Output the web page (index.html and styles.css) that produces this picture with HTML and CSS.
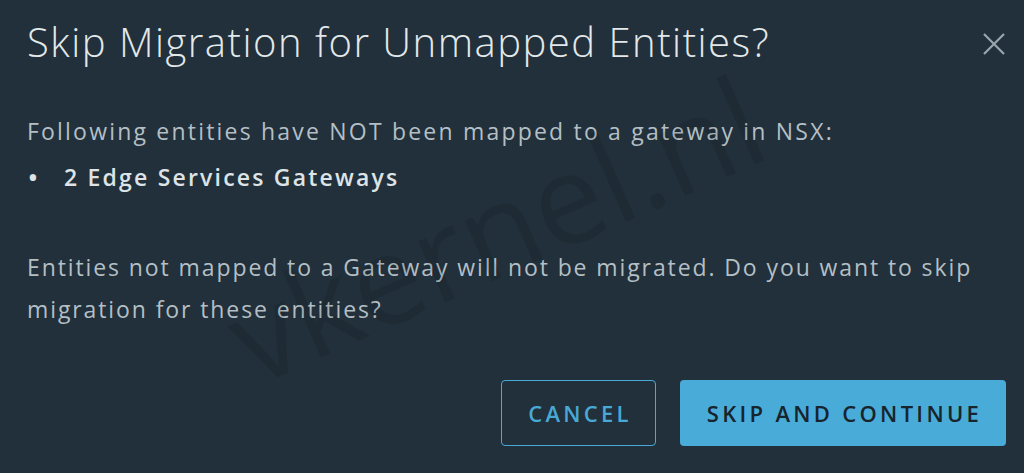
FILE: index.html
```html
<!DOCTYPE html>
<html lang="en">
<head>
    <meta charset="UTF-8">
    <meta name="viewport" content="width=device-width, initial-scale=1.0">
    <title>Skip Migration</title>
    <link rel="stylesheet" href="styles.css">
</head>
<body>
    <div class="modal">
        <div class="modal-header">
            <h1>Skip Migration for Unmapped Entities?</h1>
            <button class="close" aria-label="Close">
                <svg width="24" height="24" viewBox="0 0 24 24">
                    <path d="M2 2 L22 22 M22 2 L2 22" stroke="#9aa6ad" stroke-width="2.2" fill="none"/>
                </svg>
            </button>
        </div>
        <div class="modal-body">
            <p>Following entities have NOT been mapped to a gateway in NSX:</p>
            <ul>
                <li>2 Edge Services Gateways</li>
            </ul>
            <p class="question">Entities not mapped to a Gateway will not be migrated. Do you want to skip migration for these entities?</p>
        </div>
        <div class="modal-footer">
            <button class="btn btn-outline">Cancel</button>
            <button class="btn btn-primary">Skip and Continue</button>
        </div>
        <div class="watermark">vkernel.nl</div>
    </div>
</body>
</html>
```

FILE: styles.css
```css
body {
    margin: 0;
    background-color: #21303a;
    font-family: "Open Sans", Lato, sans-serif;
    color: #b4bfc5;
    overflow: hidden;
}
.modal {
    position: relative;
    width: 1024px;
    height: 473px;
    padding: 0 18px 0 27px;
    box-sizing: border-box;
    overflow: hidden;
}
.modal-header {
    display: flex;
    justify-content: space-between;
    align-items: flex-start;
    padding-top: 15px;
}
.modal-header h1 {
    margin: 0;
    font-size: 40px;
    font-weight: 300;
    letter-spacing: 1.5px;
    color: #e3e8eb;
    line-height: 54px;
}
.close {
    background: none;
    border: none;
    padding: 0;
    margin-top: 17px;
    width: 24px;
    height: 24px;
}
.modal-body {
    padding-top: 41px;
    font-size: 23px;
    line-height: 42px;
    letter-spacing: 2.2px;
}
.modal-body p {
    margin: 0;
}
.modal-body ul {
    margin: 4px 0 0;
    padding: 0;
    list-style: none;
    font-weight: 600;
    color: #dde3e6;
}
.modal-body li {
    display: flex;
}
.modal-body li::before {
    content: "\2022";
    width: 36px;
    padding-left: 1px;
    font-size: 26px;
}
.modal-body .question {
    margin-top: 48px;
    width: 990px;
    letter-spacing: 1.9px;
}
.modal-footer {
    display: flex;
    justify-content: flex-end;
    gap: 24px;
    margin-top: 50px;
}
.btn {
    height: 66px;
    border-radius: 4px;
    font-family: "Open Sans", sans-serif;
    font-size: 22px;
    font-weight: 600;
    letter-spacing: 3.3px;
    text-transform: uppercase;
    padding: 0 0 0 3px;
}
.btn-outline {
    width: 155px;
    background: transparent;
    border: 1.5px solid #49a9d6;
    color: #49a9d6;
}
.btn-primary {
    width: 326px;
    background: #49abd8;
    border: none;
    color: #17242c;
}
.watermark {
    position: absolute;
    left: 210px;
    top: 165px;
    font-size: 125px;
    line-height: 1;
    color: rgba(0, 0, 0, 0.09);
    transform: rotate(-24deg);
    pointer-events: none;
}
```
